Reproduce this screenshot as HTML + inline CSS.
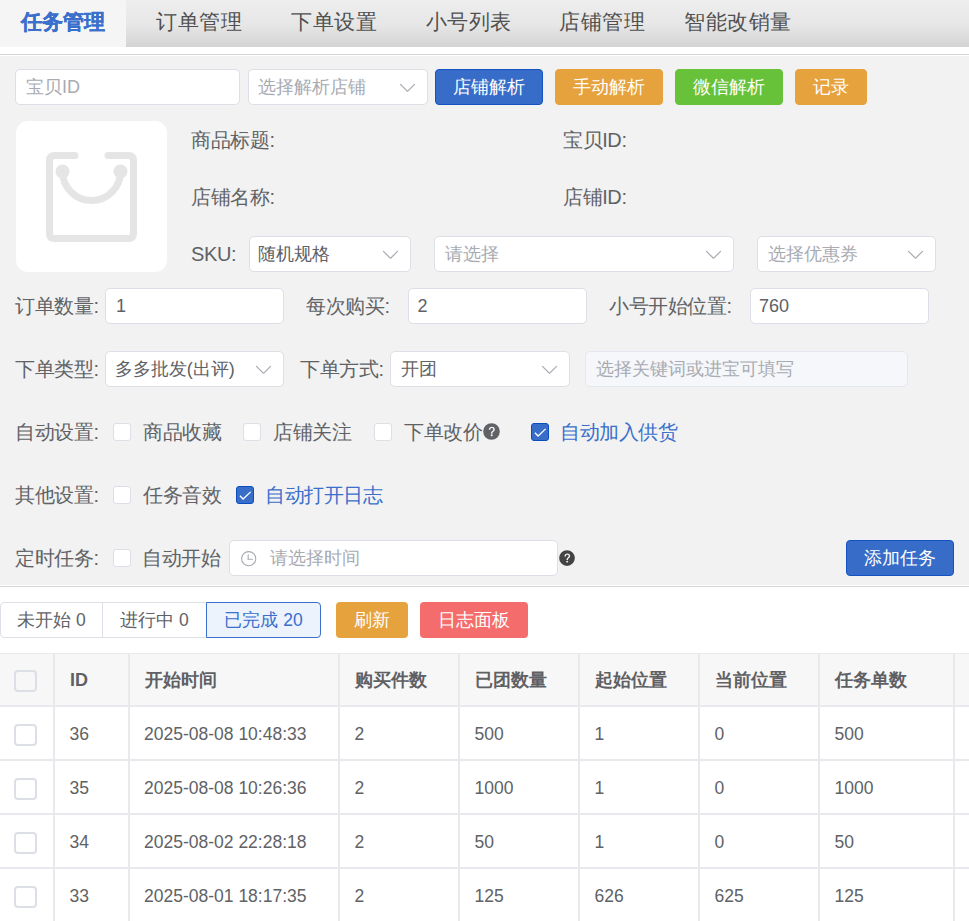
<!DOCTYPE html>
<html><head><meta charset="utf-8">
<style>
*{box-sizing:border-box;margin:0;padding:0}
html,body{width:969px;height:921px;overflow:hidden;background:#fff}
body{font-family:"Liberation Sans",sans-serif;font-size:18px;color:#606266;position:relative}
.abs{position:absolute}
#tabs{position:absolute;left:0;top:0;width:969px;height:47px;background:linear-gradient(#eeeeee 0%,#e6e6e6 55%,#d3d3d3 100%)}
.tab{position:absolute;top:0;height:47px;line-height:44px;font-size:21px;color:#505050;white-space:nowrap;letter-spacing:0.5px}
.tab.on{left:0;width:126px;height:48px;background:#f5f5f5;color:#3a6fcb;font-weight:bold;text-align:center;letter-spacing:0;-webkit-text-stroke:0.25px #3a6fcb}
#white1{position:absolute;left:0;top:47px;width:969px;height:7px;background:#fff}
#line1{position:absolute;left:0;top:54px;width:969px;height:1px;background:#d3d3d3}
#line1b{position:absolute;left:0;top:55px;width:969px;height:1px;background:#fff}
#form{position:absolute;left:0;top:56px;width:969px;height:529px;background:#f2f2f2}
#line2{position:absolute;left:0;top:586px;width:969px;height:1px;background:#d6d6d6}
.inp{position:absolute;height:36px;background:#fff;border:1px solid #dcdfe6;border-radius:5px;line-height:34px;padding-left:10px;font-size:18px;color:#606266;white-space:nowrap;overflow:hidden}
.ph{color:#a8abb2}
.arr{position:absolute;right:9.5px;top:7px;width:21px;height:21px}
.btn{position:absolute;height:36px;border-radius:4px;color:#fff;text-align:center;line-height:34px;font-size:18px;border:1px solid}
.blue{background:#376dc8;border-color:#1553c2}
.orange{background:#e6a23c;border-color:#e6a23c}
.green{background:#67c23a;border-color:#67c23a}
.red{background:#f56c6c;border-color:#f56c6c}
.lbl{position:absolute;font-size:20px;letter-spacing:-0.4px;color:#606266;line-height:24px;white-space:nowrap}
.cb{position:absolute;width:18px;height:18px;border:1px solid #dcdfe6;border-radius:3px;background:#fff}
.cb.on{background:#386ec8;border-color:#0b4cc0}
.help{position:absolute;width:20px;height:20px;line-height:0}
.rg{position:absolute;top:602px;height:36px;border:1px solid #dcdfe6;background:#fff;font-size:17.5px;line-height:35px;text-align:center;color:#606266;white-space:nowrap}
.sbtn{position:absolute;top:602px;height:36px;border-radius:4px;color:#fff;text-align:center;line-height:36px;font-size:18px}
.tl{background:#e8e9ec}
.th{position:absolute;top:655px;height:51px;line-height:51px;font-size:18px;font-weight:bold;color:#5f6064;white-space:nowrap}
.td{position:absolute;height:52px;line-height:54px;font-size:17.5px;color:#606266;white-space:nowrap}
.tcb{position:absolute;left:14px;width:23px;height:22px;border:2px solid #dcdfe6;border-radius:4px}
</style></head><body>
<div id="tabs">
  <div class="tab on">任务管理</div>
  <div class="tab" style="left:156px">订单管理</div>
  <div class="tab" style="left:291px">下单设置</div>
  <div class="tab" style="left:425.5px">小号列表</div>
  <div class="tab" style="left:559px">店铺管理</div>
  <div class="tab" style="left:684px">智能改销量</div>
</div>
<div id="white1"></div><div id="line1"></div><div id="line1b"></div>
<div id="form"></div>
<div id="line2"></div>

<!-- row 1 -->
<div class="inp ph" style="left:15px;top:69px;width:225px">宝贝ID</div>
<div class="inp ph" style="left:248px;top:69px;width:180px;padding-left:8.5px">选择解析店铺<svg class="arr" viewBox="0 0 1024 1024"><path fill="#a8abb2" d="M831.872 340.864 512 652.672 192.128 340.864a30.592 30.592 0 0 0-42.752 0 29.12 29.12 0 0 0 0 41.6L489.664 714.24a32 32 0 0 0 44.672 0l340.288-331.712a29.12 29.12 0 0 0 0-41.728 30.592 30.592 0 0 0-42.752 0z"/></svg></div>
<div class="btn blue" style="left:435px;top:69px;width:108px">店铺解析</div>
<div class="btn orange" style="left:555px;top:69px;width:108px">手动解析</div>
<div class="btn green" style="left:675px;top:69px;width:108px">微信解析</div>
<div class="btn orange" style="left:795px;top:69px;width:72px">记录</div>

<!-- image -->
<div class="abs" style="left:16px;top:121px;width:151px;height:151px;background:#fff;border-radius:12px">
<svg width="151" height="151" viewBox="0 0 151 151" style="position:absolute;left:0;top:0">
<g fill="none" stroke="#e5e5e5" stroke-width="7" stroke-linecap="round">
<path d="M59 34.5 H38.5 Q33.5 34.5 33.5 39.5 V112.5 Q33.5 117.5 38.5 117.5 H112.5 Q117.5 117.5 117.5 112.5 V39.5 Q117.5 34.5 112.5 34.5 H92"/>
<path d="M46.5 50.5 A29 29 0 0 0 104.5 50.5"/>
</g>
<circle cx="46.5" cy="50.5" r="7" fill="#e5e5e5"/><circle cx="104.5" cy="50.5" r="7" fill="#e5e5e5"/>
</svg></div>

<div class="lbl" style="left:191px;top:128px">商品标题:</div>
<div class="lbl" style="left:563px;top:128px">宝贝ID:</div>
<div class="lbl" style="left:191px;top:185px">店铺名称:</div>
<div class="lbl" style="left:563px;top:185px">店铺ID:</div>
<div class="lbl" style="left:191px;top:242px">SKU:</div>
<div class="inp" style="left:249px;top:236px;width:162px;padding-left:8px">随机规格<svg class="arr" viewBox="0 0 1024 1024"><path fill="#a8abb2" d="M831.872 340.864 512 652.672 192.128 340.864a30.592 30.592 0 0 0-42.752 0 29.12 29.12 0 0 0 0 41.6L489.664 714.24a32 32 0 0 0 44.672 0l340.288-331.712a29.12 29.12 0 0 0 0-41.728 30.592 30.592 0 0 0-42.752 0z"/></svg></div>
<div class="inp ph" style="left:434px;top:236px;width:300px">请选择<svg class="arr" viewBox="0 0 1024 1024"><path fill="#a8abb2" d="M831.872 340.864 512 652.672 192.128 340.864a30.592 30.592 0 0 0-42.752 0 29.12 29.12 0 0 0 0 41.6L489.664 714.24a32 32 0 0 0 44.672 0l340.288-331.712a29.12 29.12 0 0 0 0-41.728 30.592 30.592 0 0 0-42.752 0z"/></svg></div>
<div class="inp ph" style="left:757px;top:236px;width:179px">选择优惠券<svg class="arr" viewBox="0 0 1024 1024"><path fill="#a8abb2" d="M831.872 340.864 512 652.672 192.128 340.864a30.592 30.592 0 0 0-42.752 0 29.12 29.12 0 0 0 0 41.6L489.664 714.24a32 32 0 0 0 44.672 0l340.288-331.712a29.12 29.12 0 0 0 0-41.728 30.592 30.592 0 0 0-42.752 0z"/></svg></div>

<div class="lbl" style="left:15px;top:294px">订单数量:</div>
<div class="inp" style="left:105px;top:288px;width:179px">1</div>
<div class="lbl" style="left:306px;top:294px">每次购买:</div>
<div class="inp" style="left:408px;top:288px;width:179px;padding-left:8.5px">2</div>
<div class="lbl" style="left:609px;top:294px">小号开始位置:</div>
<div class="inp" style="left:750px;top:288px;width:179px;padding-left:8px">760</div>

<div class="lbl" style="left:15px;top:357px">下单类型:</div>
<div class="inp" style="left:105px;top:351px;width:179px;padding-left:8.7px">多多批发(出评)<svg class="arr" viewBox="0 0 1024 1024"><path fill="#a8abb2" d="M831.872 340.864 512 652.672 192.128 340.864a30.592 30.592 0 0 0-42.752 0 29.12 29.12 0 0 0 0 41.6L489.664 714.24a32 32 0 0 0 44.672 0l340.288-331.712a29.12 29.12 0 0 0 0-41.728 30.592 30.592 0 0 0-42.752 0z"/></svg></div>
<div class="lbl" style="left:300px;top:357px">下单方式:</div>
<div class="inp" style="left:390px;top:351px;width:180px">开团<svg class="arr" viewBox="0 0 1024 1024"><path fill="#a8abb2" d="M831.872 340.864 512 652.672 192.128 340.864a30.592 30.592 0 0 0-42.752 0 29.12 29.12 0 0 0 0 41.6L489.664 714.24a32 32 0 0 0 44.672 0l340.288-331.712a29.12 29.12 0 0 0 0-41.728 30.592 30.592 0 0 0-42.752 0z"/></svg></div>
<div class="inp ph" style="left:585px;top:351px;width:323px;background:#f5f7fa;border-color:#e4e7ed">选择关键词或进宝可填写</div>

<div class="lbl" style="left:15px;top:420px">自动设置:</div>
<div class="cb" style="left:113px;top:423px"></div><div class="lbl" style="left:143px;top:420px">商品收藏</div>
<div class="cb" style="left:243px;top:423px"></div><div class="lbl" style="left:273px;top:420px">店铺关注</div>
<div class="cb" style="left:374px;top:423px"></div><div class="lbl" style="left:404px;top:420px">下单改价</div>
<div class="help" style="left:482px;top:422px"><svg viewBox="0 0 1024 1024" width="19" height="19"><path fill="#606266" d="M512 64a448 448 0 1 1 0 896 448 448 0 0 1 0-896zm23.744 191.488c-52.096 0-92.928 14.784-123.2 44.352-30.976 29.568-45.76 70.4-45.76 122.496h80.256c0-29.568 5.632-52.8 17.6-68.992 13.376-19.712 35.2-28.864 66.176-28.864 23.936 0 42.944 6.336 56.32 19.712 12.672 13.376 19.712 31.68 19.712 54.912 0 17.6-6.336 34.496-19.008 49.984l-8.448 9.856c-45.76 40.832-73.216 70.4-82.368 89.408-9.856 19.008-14.08 42.24-14.08 68.992v9.856h80.96v-9.856c0-16.896 3.52-31.68 10.56-45.76 6.336-12.672 15.488-24.64 28.16-35.2 33.792-29.568 54.208-48.576 60.544-55.616 16.896-22.528 26.048-51.392 26.048-86.592 0-42.944-14.08-76.736-42.24-101.376-28.16-25.344-65.472-37.312-111.232-37.312zm-12.672 406.208a54.272 54.272 0 0 0-38.72 14.784 49.408 49.408 0 0 0-15.488 38.016c0 15.488 4.928 28.16 15.488 38.016A54.848 54.848 0 0 0 523.072 768c15.488 0 28.16-4.928 38.72-14.784a51.52 51.52 0 0 0 16.192-38.72 51.968 51.968 0 0 0-15.488-38.016 55.936 55.936 0 0 0-39.424-14.784z"/></svg></div>
<div class="cb on" style="left:531px;top:423px"><svg width="16" height="16" viewBox="0 0 16 16" style="position:absolute;left:0;top:0"><path d="M2.9 8.8 L6.1 12 L13.6 4.9" fill="none" stroke="#fff" stroke-width="1.3"/></svg></div>
<div class="lbl" style="left:560px;top:420px;color:#3a6fcb">自动加入供货</div>

<div class="lbl" style="left:15px;top:483px">其他设置:</div>
<div class="cb" style="left:113px;top:486px"></div><div class="lbl" style="left:143px;top:483px">任务音效</div>
<div class="cb on" style="left:236px;top:486px"><svg width="16" height="16" viewBox="0 0 16 16" style="position:absolute;left:0;top:0"><path d="M2.9 8.8 L6.1 12 L13.6 4.9" fill="none" stroke="#fff" stroke-width="1.3"/></svg></div>
<div class="lbl" style="left:265px;top:483px;color:#3a6fcb">自动打开日志</div>

<div class="lbl" style="left:15px;top:546px">定时任务:</div>
<div class="cb" style="left:113px;top:549px"></div><div class="lbl" style="left:142px;top:546px">自动开始</div>
<div class="inp ph" style="left:229px;top:540px;width:329px;padding-left:40px">请选择时间<svg style="position:absolute;left:10px;top:8.5px" width="17.4" height="17.4" viewBox="0 0 1024 1024"><path fill="#a8abb2" d="M512 896a384 384 0 1 0 0-768 384 384 0 0 0 0 768zm0 64a448 448 0 1 1 0-896 448 448 0 0 1 0 896z"/><path fill="#a8abb2" d="M480 256a32 32 0 0 1 32 32v256a32 32 0 0 1-64 0V288a32 32 0 0 1 32-32z"/><path fill="#a8abb2" d="M480 512h256q32 0 32 32t-32 32H480q-32 0-32-32t32-32z"/></svg></div>
<div class="help" style="left:558px;top:549px"><svg viewBox="0 0 1024 1024" width="18" height="18"><path fill="#444444" d="M512 64a448 448 0 1 1 0 896 448 448 0 0 1 0-896zm23.744 191.488c-52.096 0-92.928 14.784-123.2 44.352-30.976 29.568-45.76 70.4-45.76 122.496h80.256c0-29.568 5.632-52.8 17.6-68.992 13.376-19.712 35.2-28.864 66.176-28.864 23.936 0 42.944 6.336 56.32 19.712 12.672 13.376 19.712 31.68 19.712 54.912 0 17.6-6.336 34.496-19.008 49.984l-8.448 9.856c-45.76 40.832-73.216 70.4-82.368 89.408-9.856 19.008-14.08 42.24-14.08 68.992v9.856h80.96v-9.856c0-16.896 3.52-31.68 10.56-45.76 6.336-12.672 15.488-24.64 28.16-35.2 33.792-29.568 54.208-48.576 60.544-55.616 16.896-22.528 26.048-51.392 26.048-86.592 0-42.944-14.08-76.736-42.24-101.376-28.16-25.344-65.472-37.312-111.232-37.312zm-12.672 406.208a54.272 54.272 0 0 0-38.72 14.784 49.408 49.408 0 0 0-15.488 38.016c0 15.488 4.928 28.16 15.488 38.016A54.848 54.848 0 0 0 523.072 768c15.488 0 28.16-4.928 38.72-14.784a51.52 51.52 0 0 0 16.192-38.72 51.968 51.968 0 0 0-15.488-38.016 55.936 55.936 0 0 0-39.424-14.784z"/></svg></div>
<div class="btn blue" style="left:846px;top:540px;width:108px">添加任务</div>

<!-- status -->
<div class="rg" style="left:0;width:103px;border-radius:4px 0 0 4px">未开始 0</div>
<div class="rg" style="left:102px;width:105px">进行中 0</div>
<div class="rg" style="left:206px;width:115px;border-color:#3a6fd0;background:#ecf3fd;color:#3a6fcb;border-radius:0 4px 4px 0">已完成 20</div>
<div class="sbtn orange" style="left:336px;width:72px">刷新</div>
<div class="sbtn red" style="left:420px;width:108px">日志面板</div>

<div class="abs" style="left:0;top:653px;width:969px;height:1px;background:#e8e9ec"></div>
<div class="abs" style="left:0;top:654px;width:969px;height:51px;background:#f7f7f7"></div>
<div class="abs tl" style="left:0;top:705px;width:969px;height:2px"></div>
<div class="abs tl" style="left:0;top:759px;width:969px;height:2px"></div>
<div class="abs tl" style="left:0;top:813px;width:969px;height:2px"></div>
<div class="abs tl" style="left:0;top:867px;width:969px;height:2px"></div>
<div class="abs tl" style="left:53px;top:654px;width:2px;height:267px"></div>
<div class="abs tl" style="left:128px;top:654px;width:2px;height:267px"></div>
<div class="abs tl" style="left:338px;top:654px;width:2px;height:267px"></div>
<div class="abs tl" style="left:458px;top:654px;width:2px;height:267px"></div>
<div class="abs tl" style="left:578px;top:654px;width:2px;height:267px"></div>
<div class="abs tl" style="left:698px;top:654px;width:2px;height:267px"></div>
<div class="abs tl" style="left:818px;top:654px;width:2px;height:267px"></div>
<div class="abs tl" style="left:953px;top:654px;width:2px;height:267px"></div>
<div class="tcb" style="top:670px"></div>
<div class="th" style="left:70px">ID</div>
<div class="th" style="left:145px">开始时间</div>
<div class="th" style="left:355px">购买件数</div>
<div class="th" style="left:475px">已团数量</div>
<div class="th" style="left:595px">起始位置</div>
<div class="th" style="left:715px">当前位置</div>
<div class="th" style="left:835px">任务单数</div>
<div class="tcb" style="top:724px"></div>
<div class="td" style="left:69.5px;top:707px">36</div>
<div class="td" style="left:144px;top:707px">2025-08-08 10:48:33</div>
<div class="td" style="left:354.5px;top:707px">2</div>
<div class="td" style="left:474.5px;top:707px">500</div>
<div class="td" style="left:594.5px;top:707px">1</div>
<div class="td" style="left:714.5px;top:707px">0</div>
<div class="td" style="left:834.5px;top:707px">500</div>
<div class="tcb" style="top:778px"></div>
<div class="td" style="left:69.5px;top:761px">35</div>
<div class="td" style="left:144px;top:761px">2025-08-08 10:26:36</div>
<div class="td" style="left:354.5px;top:761px">2</div>
<div class="td" style="left:474.5px;top:761px">1000</div>
<div class="td" style="left:594.5px;top:761px">1</div>
<div class="td" style="left:714.5px;top:761px">0</div>
<div class="td" style="left:834.5px;top:761px">1000</div>
<div class="tcb" style="top:832px"></div>
<div class="td" style="left:69.5px;top:815px">34</div>
<div class="td" style="left:144px;top:815px">2025-08-02 22:28:18</div>
<div class="td" style="left:354.5px;top:815px">2</div>
<div class="td" style="left:474.5px;top:815px">50</div>
<div class="td" style="left:594.5px;top:815px">1</div>
<div class="td" style="left:714.5px;top:815px">0</div>
<div class="td" style="left:834.5px;top:815px">50</div>
<div class="tcb" style="top:886px"></div>
<div class="td" style="left:69.5px;top:869px">33</div>
<div class="td" style="left:144px;top:869px">2025-08-01 18:17:35</div>
<div class="td" style="left:354.5px;top:869px">2</div>
<div class="td" style="left:474.5px;top:869px">125</div>
<div class="td" style="left:594.5px;top:869px">626</div>
<div class="td" style="left:714.5px;top:869px">625</div>
<div class="td" style="left:834.5px;top:869px">125</div>
</body></html>
